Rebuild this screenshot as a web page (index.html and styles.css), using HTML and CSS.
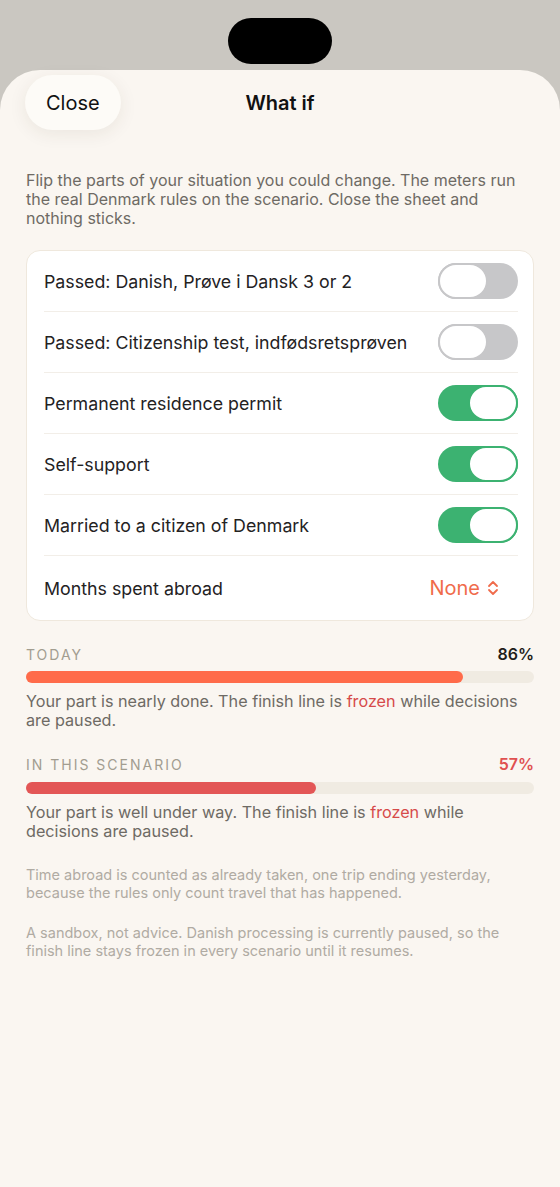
FILE: index.html
```html
<!DOCTYPE html>
<html lang="en">
<head>
    <meta charset="UTF-8">
    <meta name="viewport" content="width=device-width, initial-scale=1.0">
    <title>What if</title>
    <link rel="stylesheet" href="styles.css">
</head>
<body>
    <div class="status-bar">
        <div class="island"></div>
    </div>
    <div class="sheet">
        <div class="sheet-header">
            <button class="close-btn">Close</button>
            <div class="sheet-title">What if</div>
        </div>

        <p class="intro">Flip the parts of your situation you could change. The meters run the real Denmark rules on the scenario. Close the sheet and nothing sticks.</p>

        <div class="option-card">
            <div class="option-row">
                <span class="option-label">Passed: Danish, Prøve i Dansk 3 or 2</span>
                <span class="toggle"><span class="knob"></span></span>
            </div>
            <div class="option-row">
                <span class="option-label">Passed: Citizenship test, indfødsretsprøven</span>
                <span class="toggle"><span class="knob"></span></span>
            </div>
            <div class="option-row">
                <span class="option-label">Permanent residence permit</span>
                <span class="toggle on"><span class="knob"></span></span>
            </div>
            <div class="option-row">
                <span class="option-label">Self-support</span>
                <span class="toggle on"><span class="knob"></span></span>
            </div>
            <div class="option-row">
                <span class="option-label">Married to a citizen of Denmark</span>
                <span class="toggle on"><span class="knob"></span></span>
            </div>
            <div class="option-row">
                <span class="option-label">Months spent abroad</span>
                <span class="picker">None
                    <svg width="14" height="18" viewBox="0 0 14 18" fill="none" stroke="currentColor" stroke-width="1.8" stroke-linecap="round" stroke-linejoin="round">
                        <path d="M3 7 L7 3 L11 7"/>
                        <path d="M3 11 L7 15 L11 11"/>
                    </svg>
                </span>
            </div>
        </div>

        <div class="meter">
            <div class="meter-head">
                <span class="meter-label">Today</span>
                <span class="meter-value">86%</span>
            </div>
            <div class="meter-track"><div class="meter-fill" style="width: 86%"></div></div>
            <p class="meter-note">Your part is nearly done. The finish line is <span class="frozen">frozen</span> while decisions are paused.</p>
        </div>

        <div class="meter scenario">
            <div class="meter-head">
                <span class="meter-label">In this scenario</span>
                <span class="meter-value">57%</span>
            </div>
            <div class="meter-track"><div class="meter-fill" style="width: 57%"></div></div>
            <p class="meter-note">Your part is well under way. The finish line is <span class="frozen">frozen</span> while decisions are paused.</p>
        </div>

        <p class="footnote">Time abroad is counted as already taken, one trip ending yesterday, because the rules only count travel that has happened.</p>
        <p class="footnote">A sandbox, not advice. Danish processing is currently paused, so the finish line stays frozen in every scenario until it resumes.</p>
    </div>
</body>
</html>
```

FILE: styles.css
```css
body {
    margin: 0;
    background: #cac7c1;
    font-family: Inter, "Noto Sans", sans-serif;
    color: #1f1d1a;
}

.status-bar {
    height: 70px;
    display: flex;
    justify-content: center;
    padding-top: 18px;
    box-sizing: border-box;
}

.island {
    width: 104px;
    height: 46px;
    border-radius: 23px;
    background: #000;
}

.sheet {
    background: #faf6f1;
    border-radius: 40px 40px 0 0;
    min-height: 1117px;
    padding: 5px 26px 40px;
    box-sizing: border-box;
}

.sheet-header {
    position: relative;
    height: 55px;
    display: flex;
    align-items: center;
    justify-content: center;
}

.close-btn {
    position: absolute;
    left: -1px;
    top: 0;
    height: 55px;
    padding: 0 21px;
    border: none;
    border-radius: 28px;
    background: #fdfbf7;
    box-shadow: 0 4px 18px rgba(60, 50, 30, 0.08);
    font-family: inherit;
    font-size: 20px;
    color: #111;
}

.sheet-title {
    font-size: 20px;
    font-weight: 600;
    color: #111;
}

.intro {
    margin: 41px 0 22px;
    font-size: 16px;
    line-height: 19px;
    color: #6e6a64;
}

.option-card {
    background: #fff;
    border: 1px solid #efe8dd;
    border-radius: 14px;
    padding: 0 15px 0 17px;
}

.option-row {
    height: 60px;
    display: flex;
    align-items: center;
    justify-content: space-between;
    border-bottom: 1px solid #f2eee8;
}

.option-row:last-child {
    border-bottom: none;
    height: 64px;
}

.option-label {
    font-size: 17.8px;
    color: #24221f;
}

.toggle {
    width: 80px;
    height: 36px;
    border-radius: 18px;
    background: #c7c7c9;
    display: flex;
    box-sizing: border-box;
}

.knob {
    width: 50px;
    height: 36px;
    border-radius: 18px;
    background: #fff;
    border: 2px solid #c7c7c9;
    box-sizing: border-box;
}

.toggle.on {
    background: #3cb271;
    justify-content: flex-end;
}

.toggle.on .knob {
    border-color: #3cb271;
}

.picker {
    display: flex;
    align-items: center;
    gap: 6px;
    margin-right: 18px;
    font-size: 20px;
    color: #f06b4b;
}

.meter {
    margin-top: 23px;
}

.meter-head {
    display: flex;
    justify-content: space-between;
    align-items: baseline;
}

.meter-label {
    font-size: 14px;
    letter-spacing: 2px;
    text-transform: uppercase;
    color: #a29d90;
}

.meter-value {
    font-size: 16px;
    font-weight: 600;
    color: #1f1d1a;
}

.meter-track {
    margin-top: 7px;
    height: 12px;
    border-radius: 6px;
    background: #f0ebe2;
}

.meter-fill {
    height: 12px;
    border-radius: 6px;
    background: #ff6b4a;
}

.meter-note {
    margin: 9px 0 0;
    font-size: 16.2px;
    line-height: 19px;
    color: #6e6a64;
}

.frozen {
    color: #d64a4a;
}

.scenario {
    margin-top: 24px;
}

.scenario .meter-track {
    margin-top: 8px;
}

.scenario .meter-value {
    color: #e05050;
}

.scenario .meter-fill {
    background: #e35656;
}

.footnote {
    margin: 25px 0 0;
    font-size: 14.5px;
    line-height: 18px;
    color: #b0aba3;
}

.footnote + .footnote {
    margin-top: 22px;
}
```
